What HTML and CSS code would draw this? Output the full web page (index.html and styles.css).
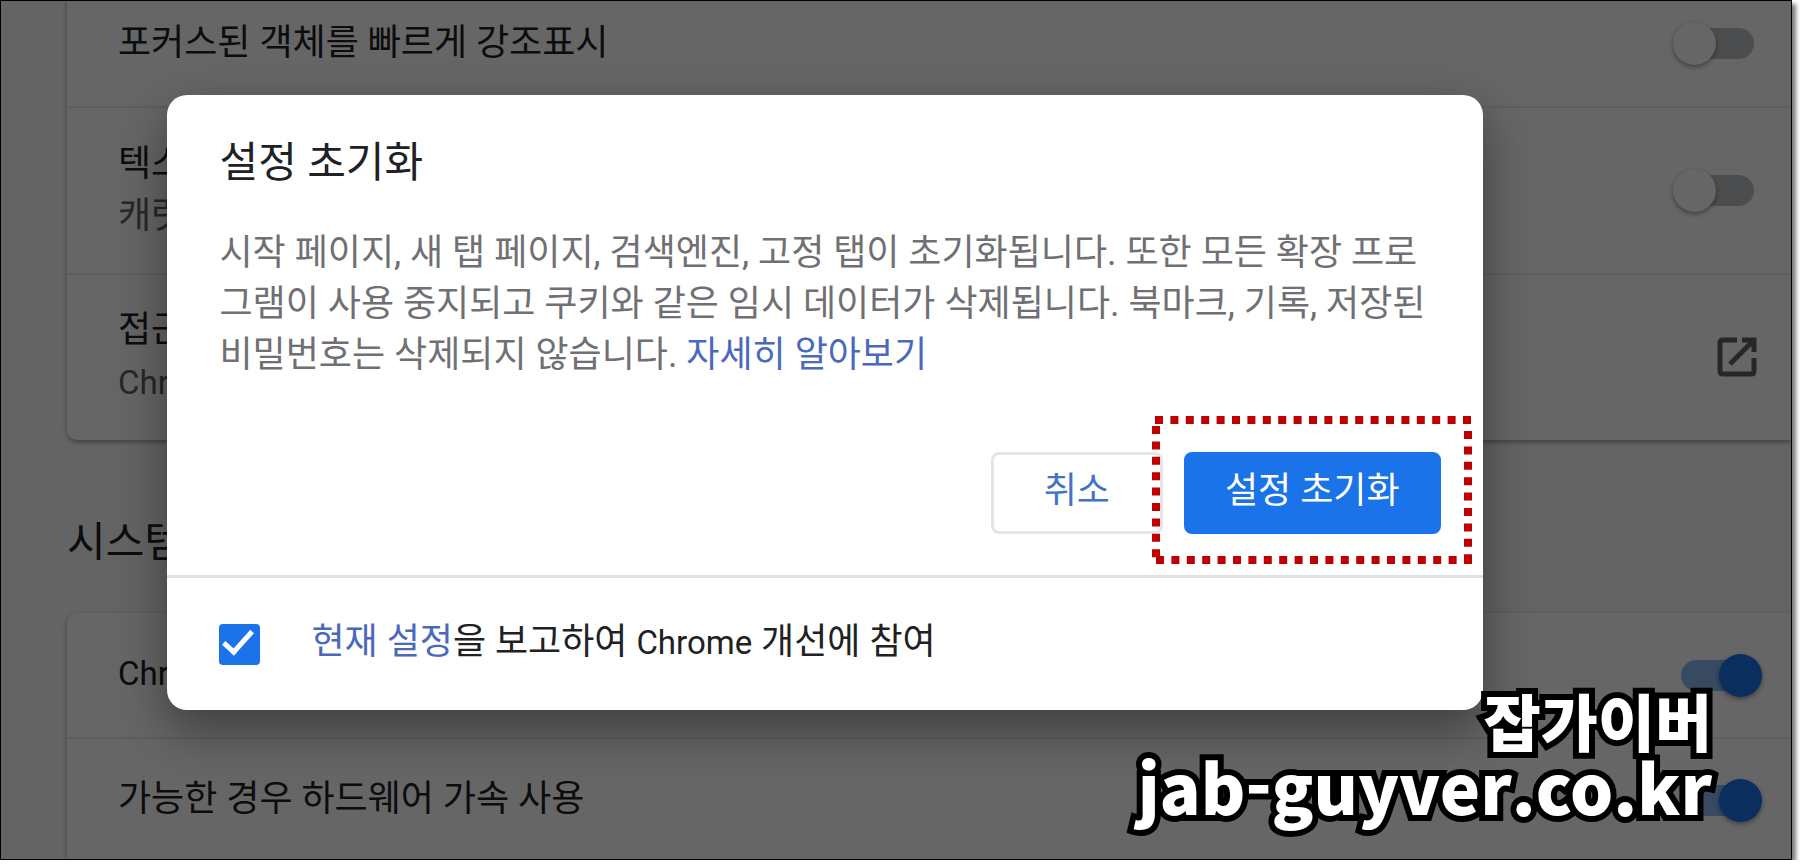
FILE: index.html
```html
<!DOCTYPE html>
<html lang="ko">
<head>
  <meta charset="UTF-8" />
  <title>설정 초기화</title>
  <link rel="stylesheet" href="styles.css">
</head>
<body>
  <div class="screen">
    <main class="settings">
      <section class="card card-top">
        <div class="row">
          <label for="focus-highlight">포커스된 객체를 빠르게 강조표시</label>
          <input type="checkbox" class="switch" id="focus-highlight">
        </div>
        <div class="row row-tall">
          <label for="caret">텍스<br><span class="sub">캐럿</span></label>
          <input type="checkbox" class="switch" id="caret">
        </div>
        <div class="row row-tall">
          <div>접근<br><span class="sub latin">Chr</span></div>
          <button class="icon-btn" aria-label="열기">
            <svg viewBox="0 0 42 42" width="42" height="42" fill="none" stroke="#5f6368" stroke-width="5">
              <path d="M21 4H7Q4 4 4 7V35Q4 38 7 38H35Q38 38 38 35V22" />
              <path d="M26 4H38V16M38 4L14 28" />
            </svg>
          </button>
        </div>
      </section>

      <h2>시스템</h2>
      <section class="card card-bottom">
        <div class="row row-short">
          <label for="background" class="latin">Chr</label>
          <input type="checkbox" class="switch" id="background" checked>
        </div>
        <div class="row row-short">
          <label for="hardware">가능한 경우 하드웨어 가속 사용</label>
          <input type="checkbox" class="switch" id="hardware" checked>
        </div>
      </section>
    </main>

    <div class="backdrop">
      <div class="dialog" role="dialog" aria-labelledby="dialog-title">
        <div class="dialog-body">
          <h1 id="dialog-title">설정 초기화</h1>
          <p>시작 페이지, 새 탭 페이지, 검색엔진, 고정 탭이 초기화됩니다. 또한 모든 확장 프로그램이 사용 중지되고 쿠키와 같은 임시 데이터가 삭제됩니다. 북마크, 기록, 저장된 비밀번호는 삭제되지 않습니다. <a href="#">자세히 알아보기</a></p>
          <div class="actions">
            <button class="btn cancel">취소</button>
            <button class="btn primary">설정 초기화</button>
            <svg class="highlight" viewBox="0 0 320 148" fill="none" stroke="#c00000" stroke-width="8" stroke-dasharray="8 7.4">
              <path d="M3 4H320M316 15V148M320 144H2M4 10V148" />
            </svg>
          </div>
        </div>
        <div class="dialog-footer">
          <input type="checkbox" class="check" id="report" checked>
          <label for="report"><a href="#">현재 설정</a>을 보고하여 <span class="latin">Chrome</span> 개선에 참여</label>
        </div>
      </div>
    </div>

    <div class="watermark">
      <div class="watermark-name">잡가이버</div>
      <div>jab-guyver.co.kr</div>
    </div>
  </div>
</body>
</html>
```

FILE: styles.css
```css
* {
  box-sizing: border-box;
}

body {
  margin: 0;
  background: white;
  color: #202124;
  font-family: Roboto, "Noto Sans CJK KR", sans-serif;
  font-size: 36px;
  line-height: 52px;
}

.screen {
  position: relative;
  height: calc(100vh - 8px);
  margin-right: 8px;
  border: 1px solid black;
  overflow: hidden;
  background: #fbfbfb;
  box-shadow: 4px 4px 4px rgba(0, 0, 0, 0.5);
}

.settings {
  padding-left: 66px;
}

.card {
  background: white;
  border-radius: 10px 0 0 10px;
  box-shadow: 0 2px 5px rgba(60, 64, 67, 0.5);
}

.card-top {
  margin-top: -20px;
}

.card-bottom {
  padding-bottom: 30px;
}

.row {
  display: flex;
  align-items: center;
  justify-content: space-between;
  height: 125px;
  padding: 0 37px 2px 51px;
  white-space: nowrap;
}

.row + .row {
  border-top: 2px solid #e8eaed;
}

.row-tall {
  height: 167px;
}

.row-short {
  height: 124px;
}

.sub {
  color: #5f6368;
}

.latin {
  font-size: 33px;
}

.switch {
  appearance: none;
  position: relative;
  width: 81px;
  height: 43px;
  margin: 2px 0 0;
}

.switch::before {
  content: "";
  position: absolute;
  top: 6px;
  left: 8px;
  right: 0;
  height: 31px;
  border-radius: 16px;
  background: #bdc1c6;
}

.switch::after {
  content: "";
  position: absolute;
  top: 0;
  left: 0;
  width: 43px;
  height: 43px;
  border-radius: 50%;
  background: white;
  box-shadow: 0 2px 5px rgba(0, 0, 0, 0.4);
}

.switch:checked {
  margin-right: -8px;
}

.switch:checked::before {
  left: 0;
  right: 8px;
  background: #8db8f5;
}

.switch:checked::after {
  left: 38px;
  background: #1a73e8;
}

.icon-btn {
  display: flex;
  padding: 0;
  margin-right: -4px;
  border: none;
  background: none;
}

h1,
h2 {
  margin: 0;
  font-size: 42px;
  font-weight: 400;
  line-height: 60px;
}

h2 {
  padding: 73px 0 40px;
}

.backdrop {
  position: absolute;
  inset: 0;
  display: flex;
  justify-content: center;
  align-items: flex-start;
  padding: 94px 143px 0 0;
  background: rgba(0, 0, 0, 0.6);
}

.dialog {
  width: 1316px;
  border-radius: 20px;
  background: white;
  box-shadow: 0 20px 50px rgba(0, 0, 0, 0.4);
}

.dialog-body {
  padding: 38px 42px 41px 53px;
}

a {
  color: #4a69bd;
  text-decoration: none;
}

.dialog p {
  margin: 35px 0 71px;
  padding-right: 12px;
  color: #707074;
  line-height: 51px;
  word-break: break-all;
}

.actions {
  position: relative;
  display: flex;
  justify-content: flex-end;
  gap: 21px;
}

.btn {
  height: 82px;
  padding: 0 38px 4px;
  border: 3px solid #e3e5e8;
  border-radius: 8px;
  background: white;
  color: #4274c4;
  font: inherit;
}

.cancel {
  padding: 0 50px 4px;
}

.primary {
  border-color: #1a73e8;
  background: #1a73e8;
  color: white;
}

.highlight {
  position: absolute;
  top: -36px;
  right: -31px;
  width: 320px;
  height: 148px;
}

.dialog-footer {
  display: flex;
  align-items: center;
  gap: 52px;
  height: 135px;
  padding: 0 52px;
  border-top: 3px solid #e0e0e0;
}

.dialog-footer label {
  padding-bottom: 4px;
}

.check {
  appearance: none;
  position: relative;
  width: 41px;
  height: 41px;
  margin: 0;
  border-radius: 4px;
  background: #1a73e8;
}

.check::after {
  content: "";
  position: absolute;
  top: 0;
  left: 11px;
  width: 11px;
  height: 25px;
  border: solid white;
  border-width: 0 5px 5px 0;
  transform: rotate(42deg);
}

.watermark {
  position: absolute;
  right: 79px;
  bottom: 40px;
  color: white;
  font-family: "Noto Sans CJK KR", sans-serif;
  font-size: 68px;
  font-weight: 900;
  line-height: 66px;
  text-align: right;
  -webkit-text-stroke: 12px black;
  paint-order: stroke fill;
}

.watermark-name {
  font-size: 62px;
}
```
